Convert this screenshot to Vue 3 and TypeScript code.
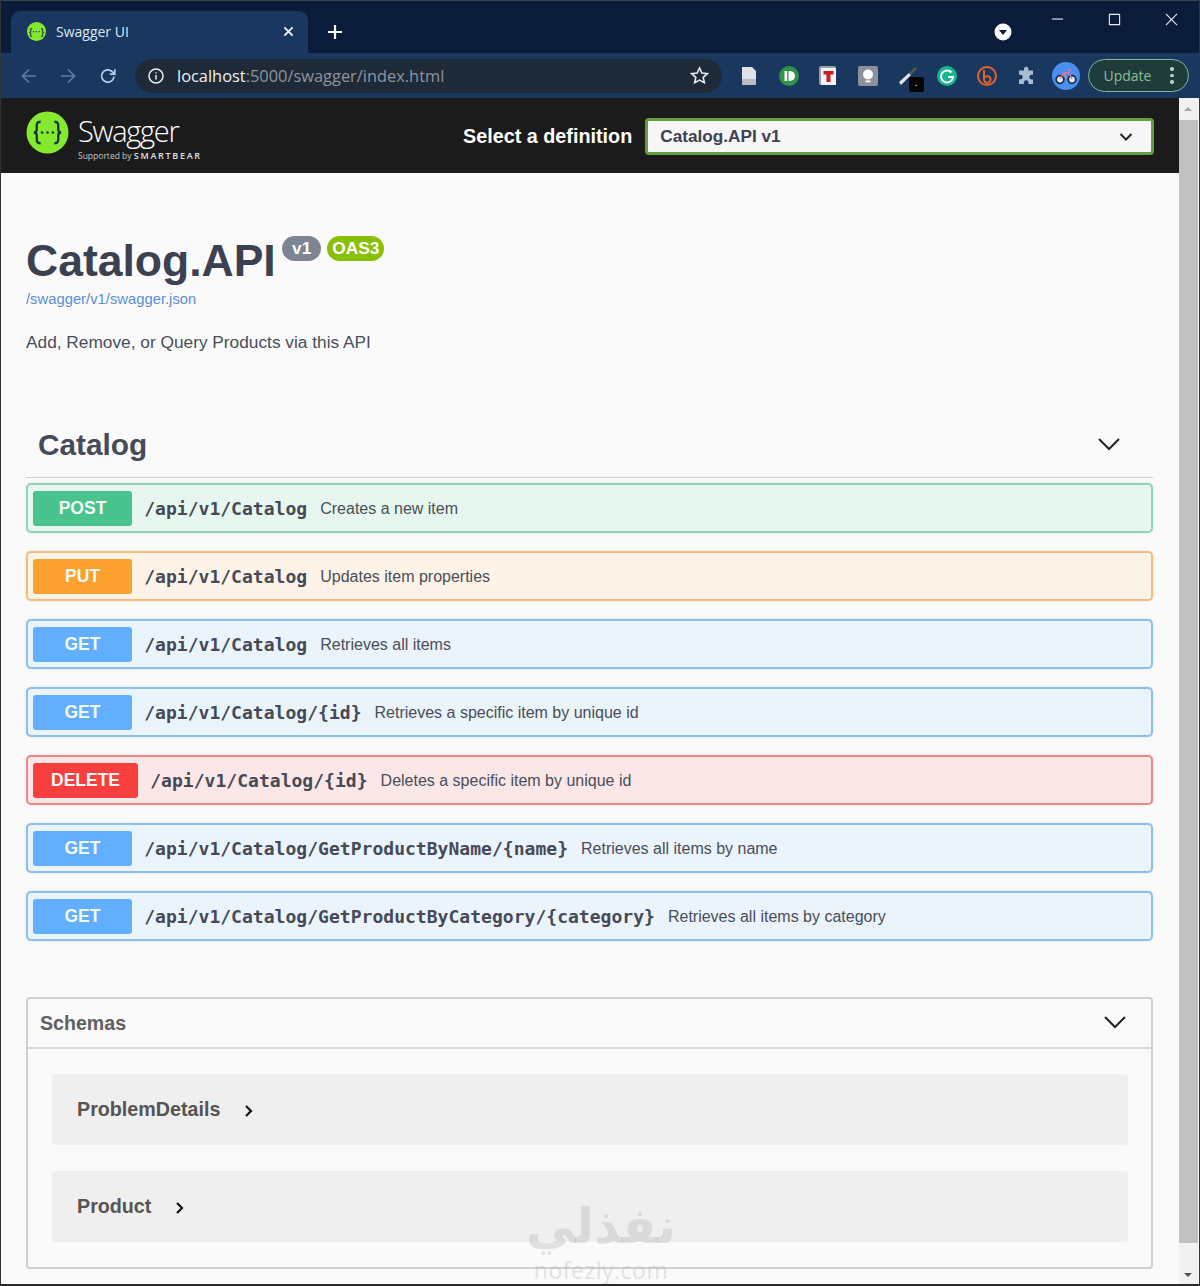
<template>
  <div class="window">
    <!-- browser chrome -->
    <div class="tabstrip">
      <div class="tab">
        <svg class="favicon" viewBox="0 0 18 18">
          <circle cx="9" cy="9" r="9" fill="#85ea2d" />
          <text x="9" y="12" text-anchor="middle" class="favicon-text">{···}</text>
        </svg>
        <span class="tab-title">Swagger UI</span>
        <svg class="tab-close" viewBox="0 0 12 12"><path d="M1.5 1.5l9 9M10.5 1.5l-9 9" /></svg>
      </div>
      <svg class="new-tab" viewBox="0 0 16 16"><path d="M8 1v14M1 8h14" /></svg>
      <div class="strip-spacer"></div>
      <svg class="media-btn" viewBox="0 0 18 18">
        <circle cx="9" cy="9" r="8.5" fill="#fff" />
        <path d="M5 7h8l-4 5z" fill="#0a1c3a" />
      </svg>
      <div class="win-buttons">
        <svg viewBox="0 0 14 14"><path d="M1 6.5h12" /></svg>
        <svg viewBox="0 0 14 14"><path d="M1.5 1.5h11v11h-11z" /></svg>
        <svg viewBox="0 0 14 14"><path d="M1 1l12 12M13 1L1 13" /></svg>
      </div>
    </div>

    <div class="toolbar">
      <svg class="nav-icon dim" viewBox="0 0 18 18"><path d="M16 9H2.5M9 2.5L2.5 9 9 15.5" /></svg>
      <svg class="nav-icon dim" viewBox="0 0 18 18"><path d="M2 9h13.5M9 2.5L15.5 9 9 15.5" /></svg>
      <svg class="nav-icon reload" viewBox="0 0 18 18"><path d="M15 9.5A6.2 6.2 0 1 1 13.2 4.6L15.5 7" /><path d="M15.8 2.2v5h-5" /></svg>
      <div class="omnibox">
        <svg class="info-icon" viewBox="0 0 16 16">
          <circle cx="8" cy="8" r="7" />
          <path d="M8 7v4.5M8 4.2v1.4" />
        </svg>
        <span class="url"><span class="host">localhost</span>:5000/swagger/index.html</span>
        <svg class="star" viewBox="0 0 18 18"><path d="M9 1.8l2.2 4.8 5.2.6-3.9 3.500 1.1 5.200L9 13.300l-4.600 2.600 1.100-5.200-3.900-3.500 5.200-.6z" /></svg>
      </div>
      <div class="extensions">
        <svg viewBox="0 0 20 20"><path d="M3 1h10l4 4v14H3z" fill="#dfe3e8" /><path d="M3 13h14v6H3z" fill="#b9bcc0" /></svg>
        <svg viewBox="0 0 20 20"><circle cx="10" cy="10" r="10" fill="#2f9444" /><rect x="5.500" y="5" width="2.600" height="10" fill="#fff" /><path d="M9.500 5h1.500a5 5 0 0 1 0 10H9.500z" fill="#fff" /></svg>
        <svg viewBox="0 0 20 20"><rect x="1" y="0" width="17" height="19" rx="2" fill="#9aa0a8" /><rect x="3" y="2" width="15" height="17" fill="#f4f4f4" /><path d="M5.500 5h10v3.500h-3V16h-4V8.500h-3z" fill="#d11a20" /></svg>
        <svg viewBox="0 0 20 20"><rect width="20" height="20" rx="2" fill="#8b929a" /><circle cx="10" cy="8.500" r="5" fill="#fff" /><rect x="7.500" y="14.500" width="5" height="1.800" fill="#fff" /></svg>
        <div class="pen-wrap">
          <svg viewBox="0 0 20 20"><path d="M1 16L11 7l2 2L3 19z" fill="#e6e6e6" /><path d="M11 7l6-6 2 2-6 6z" fill="#555" /></svg>
          <span class="pen-badge">.</span>
        </div>
        <svg viewBox="0 0 20 20"><circle cx="10" cy="10" r="10" fill="#15b58e" /><path d="M14.500 6.500A6 6 0 1 0 16 11h-5" fill="none" stroke="#fff" stroke-width="2" /></svg>
        <svg viewBox="0 0 20 20"><circle cx="10" cy="10" r="9" fill="none" stroke="#e0642c" stroke-width="2" /><path d="M7 4v9.500a3.300 3.300 0 1 0 1-2.400" fill="none" stroke="#e0642c" stroke-width="2" /></svg>
        <svg viewBox="0 0 20 20"><path d="M7 3a2.200 2.200 0 0 1 4.400 0v1.500H16v4.300h-1.400a2.300 2.300 0 0 0 0 4.600H16V18H11.500v-1.400a2.300 2.300 0 0 0-4.600 0V18H2v-4.600h1.400a2.300 2.300 0 0 0 0-4.600H2V4.500h5z" fill="#a9bcd6" /></svg>
        <svg class="avatar" viewBox="0 0 28 28">
          <circle cx="14" cy="14" r="14" fill="#4c8df0" />
          <circle cx="8" cy="17.500" r="3.800" fill="#dfe8f5" stroke="#1d2a3a" stroke-width="1.800" />
          <circle cx="20" cy="17.500" r="3.800" fill="#dfe8f5" stroke="#1d2a3a" stroke-width="1.800" />
          <path d="M8 17l4-6h5l3 6M12 11l2 6M16 8h3" fill="none" stroke="#e07a8a" stroke-width="1.300" />
        </svg>
      </div>
      <div class="update-btn">
        <span>Update</span>
        <span class="dots"><i></i><i></i><i></i></span>
      </div>
    </div>

    <div class="viewport">
      <div class="page">
        <!-- swagger topbar -->
        <header class="topbar">
          <div class="logo">
            <svg class="logo-mark" viewBox="0 0 44 44">
              <circle cx="22" cy="22" r="21.500" fill="#85ea2d" />
              <path d="M15 11c-4 0-4 2-4 5v3c0 2-1 3-3 3 2 0 3 1 3 3v3c0 3 0 5 4 5M29 11c4 0 4 2 4 5v3c0 2 1 3 3 3-2 0-3 1-3 3v3c0 3 0 5-4 5" fill="none" stroke="#173647" stroke-width="2.400" />
              <circle cx="16.500" cy="22" r="1.300" fill="#173647" />
              <circle cx="22" cy="22" r="1.300" fill="#173647" />
              <circle cx="27.500" cy="22" r="1.300" fill="#173647" />
            </svg>
            <div class="logo-text">
              <span class="logo-name">Swagger</span>
              <span class="logo-sub">Supported by <b>SMARTBEAR</b></span>
            </div>
          </div>
          <span class="select-label">Select a definition</span>
          <div class="select-box">
            <span>Catalog.API v1</span>
            <svg viewBox="0 0 14 10"><path d="M1.500 2l5.500 5.500L12.500 2" /></svg>
          </div>
        </header>

        <section class="info">
          <div class="title-row">
            <h1>Catalog.API</h1>
            <span class="badge version">v1</span>
            <span class="badge oas">OAS3</span>
          </div>
          <a class="spec-link">/swagger/v1/swagger.json</a>
          <p class="api-desc">Add, Remove, or Query Products via this API</p>
        </section>

        <section class="tag-section">
          <div class="tag-head">
            <h2>Catalog</h2>
            <svg class="chev-down" viewBox="0 0 24 14"><path d="M2 2l10 10L22 2" /></svg>
          </div>
          <div class="ops">
            <div v-for="op in operations" :key="op.method + op.path" class="opblock" :class="op.method.toLowerCase()">
              <span class="method">{{ op.method }}</span>
              <span class="path">{{ op.path }}</span>
              <span class="summary">{{ op.summary }}</span>
            </div>
          </div>
        </section>

        <section class="schemas">
          <div class="schemas-head">
            <h3>Schemas</h3>
            <svg class="chev-down" viewBox="0 0 24 14"><path d="M2 2l10 10L22 2" /></svg>
          </div>
          <div class="models">
            <div v-for="m in models" :key="m" class="model">
              <span>{{ m }}</span>
              <svg viewBox="0 0 10 14"><path d="M2 2l5 5-5 5" /></svg>
            </div>
          </div>
        </section>
      </div>

      <div class="scrollbar">
        <div class="arrow up"></div>
        <div class="thumb"></div>
        <div class="arrow down"></div>
      </div>
    </div>

    <!-- watermark over the page -->
    <div class="watermark">
      <span class="wm-ar" lang="ar" dir="rtl">نفذلي</span>
      <span class="wm-en">nofezly.com</span>
    </div>
  </div>
</template>

<script setup lang="ts">
interface Operation {
  method: string
  path: string
  summary: string
}

const operations: Operation[] = [
  { method: 'POST', path: '/api/v1/Catalog', summary: 'Creates a new item' },
  { method: 'PUT', path: '/api/v1/Catalog', summary: 'Updates item properties' },
  { method: 'GET', path: '/api/v1/Catalog', summary: 'Retrieves all items' },
  { method: 'GET', path: '/api/v1/Catalog/{id}', summary: 'Retrieves a specific item by unique id' },
  { method: 'DELETE', path: '/api/v1/Catalog/{id}', summary: 'Deletes a specific item by unique id' },
  { method: 'GET', path: '/api/v1/Catalog/GetProductByName/{name}', summary: 'Retrieves all items by name' },
  { method: 'GET', path: '/api/v1/Catalog/GetProductByCategory/{category}', summary: 'Retrieves all items by category' },
]

const models = ['ProblemDetails', 'Product']
</script>

<style>
html,
body {
  margin: 0;
  background: #fafafa;
}
</style>

<style scoped>
.window {
  position: relative;
  width: 1200px;
  height: 1286px;
  overflow: hidden;
  display: flex;
  flex-direction: column;
  box-sizing: border-box;
  border-left: 1px solid #333;
  border-right: 1px solid #333;
  border-bottom: 2px solid #2a2a2a;
  font-family: "Liberation Sans", Arial, sans-serif;
  background: #fafafa;
}

/* Tabs */
.tabstrip {
  height: 53px;
  flex: none;
  display: flex;
  align-items: flex-end;
  background: #0a1c3a;
  box-sizing: border-box;
  border-top: 1px solid #39424f;
}
.tab {
  width: 297px;
  height: 42px;
  margin-left: 10px;
  background: #1a3760;
  border-radius: 9px 9px 0 0;
  display: flex;
  align-items: center;
  box-sizing: border-box;
  padding: 0 0 2px 16px;
}
.favicon {
  width: 19px;
  height: 19px;
  flex: none;
}
.favicon-text {
  font-size: 8px;
  font-weight: 700;
  fill: #173647;
  font-family: "Liberation Sans", sans-serif;
}
.tab-title {
  margin-left: 10px;
  font-family: "Open Sans", sans-serif;
  font-size: 14px;
  color: #dfe6f0;
  flex: 1;
}
.tab-close {
  width: 11px;
  height: 11px;
  margin-right: 14px;
  fill: none;
  stroke: #f2f4f7;
  stroke-width: 2;
}
.new-tab {
  width: 16px;
  height: 16px;
  margin: 0 0 13px 19px;
  fill: none;
  stroke: #fff;
  stroke-width: 2.200;
}
.strip-spacer {
  flex: 1;
}
.media-btn {
  width: 18px;
  height: 18px;
  margin-bottom: 12px;
}
.win-buttons {
  align-self: flex-start;
  display: flex;
  gap: 44px;
  margin: 12px 21px 0 39px;
}
.win-buttons svg {
  width: 13px;
  height: 13px;
  fill: none;
  stroke: #e6eaf0;
  stroke-width: 1.200;
}

/* Address bar */
.toolbar {
  height: 45px;
  flex: none;
  display: flex;
  align-items: center;
  background: #1a3760;
  padding-left: 19px;
}
.nav-icon {
  width: 18px;
  height: 18px;
  margin-right: 21px;
  fill: none;
  stroke-width: 1.700;
}
.nav-icon.dim {
  stroke: #5f7ba6;
}
.nav-icon.reload {
  stroke: #b4cdf0;
  margin-left: 1px;
  margin-right: 18px;
}
.omnibox {
  width: 587px;
  height: 34px;
  border-radius: 17px;
  background: #1f2a38;
  display: flex;
  align-items: center;
  box-sizing: border-box;
  padding: 0 13px;
  flex: none;
}
.info-icon {
  width: 16px;
  height: 16px;
  fill: none;
  stroke: #eee;
  stroke-width: 1.500;
  flex: none;
}
.url {
  margin-left: 13px;
  font-family: "Open Sans", sans-serif;
  font-size: 16.400px;
  color: #8e959f;
  flex: 1;
  white-space: nowrap;
}
.host {
  color: #eef0f3;
}
.star {
  width: 19px;
  height: 19px;
  fill: none;
  stroke: #e8ebef;
  stroke-width: 1.500;
}
.extensions {
  display: flex;
  align-items: center;
  gap: 19.700px;
  margin-left: 17px;
}
.extensions > svg,
.pen-wrap svg {
  width: 20px;
  height: 20px;
  flex: none;
  display: block;
}
.extensions > svg.avatar {
  width: 28px;
  height: 28px;
  margin-left: -5px;
}
.pen-wrap {
  position: relative;
}
.pen-badge {
  position: absolute;
  left: 11px;
  top: 11px;
  width: 15px;
  height: 15px;
  background: #050505;
  border-radius: 2px;
  color: #fff;
  font-size: 10px;
  line-height: 11px;
  text-align: center;
}
.update-btn {
  margin-left: 8px;
  width: 101px;
  height: 33px;
  box-sizing: border-box;
  border: 1px solid #7fb89c;
  border-radius: 17px;
  background: #1f3b3a;
  display: flex;
  align-items: center;
  justify-content: space-between;
  padding: 0 14px 0 15px;
  font-family: "Open Sans", sans-serif;
  font-size: 14px;
  color: #8dbd96;
}
.dots {
  display: flex;
  flex-direction: column;
  gap: 3px;
}
.dots i {
  display: block;
  width: 3.500px;
  height: 3.500px;
  border-radius: 50%;
  background: #a8d8bc;
}

/* Page */
.viewport {
  flex: 1;
  min-height: 0;
  display: flex;
}
.page {
  flex: 1;
  min-width: 0;
  background: #fafafa;
}
.scrollbar {
  width: 19px;
  flex: none;
  margin-right: 1px;
  display: flex;
  flex-direction: column;
  background: #f1f1f1;
}
.thumb {
  flex: 1;
  background: #c1c1c1;
}
.arrow {
  height: 22px;
  position: relative;
}
.arrow::after {
  content: "";
  position: absolute;
  left: 5px;
  width: 0;
  height: 0;
  border-left: 4px solid transparent;
  border-right: 4px solid transparent;
}
.arrow.up::after {
  top: 9px;
  border-bottom: 4px solid #a5a5a5;
}
.arrow.down {
  height: 41px;
}
.arrow.down::after {
  bottom: 7px;
  border-top: 4px solid #505050;
}

.topbar {
  height: 75px;
  background: #1b1b1b;
  display: flex;
  align-items: center;
  box-sizing: border-box;
  padding: 0 25px 0 25px;
}
.logo {
  display: flex;
  align-items: center;
  margin-top: -6px;
  width: 437px;
  flex: none;
}
.logo-mark {
  width: 43px;
  height: 43px;
  flex: none;
}
.logo-text {
  display: flex;
  flex-direction: column;
  margin-left: 9px;
  margin-top: 12px;
  color: #fff;
}
.logo-name {
  font-family: "Open Sans", sans-serif;
  font-size: 29px;
  line-height: 32px;
  letter-spacing: -1.300px;
  font-weight: 300;
}
.logo-sub {
  font-family: "Open Sans", sans-serif;
  font-size: 8.500px;
  line-height: 12px;
  margin-top: 3px;
  color: #c8c8c8;
}
.logo-sub b {
  font-size: 9px;
  font-weight: 600;
  letter-spacing: 1.700px;
  color: #e0e0e0;
}
.select-label {
  font-size: 19.800px;
  font-weight: 700;
  color: #fff;
  white-space: nowrap;
  margin-top: 2px;
}
.select-box {
  margin-left: 13px;
  flex: 1;
  height: 37px;
  margin-top: 2px;
  box-sizing: border-box;
  border: 3px solid #62a03f;
  border-radius: 4px;
  background: #f7f7f7;
  display: flex;
  align-items: center;
  justify-content: space-between;
  padding: 0 18px 0 12px;
  font-size: 17.200px;
  font-weight: 700;
  color: #3b4151;
}
.select-box svg {
  width: 14px;
  height: 10px;
  fill: none;
  stroke: #222;
  stroke-width: 2;
}

.info {
  padding: 63px 25px 0;
}
.title-row {
  display: flex;
  align-items: flex-start;
}
h1 {
  margin: 0;
  font-size: 44.500px;
  line-height: 50px;
  font-weight: 700;
  color: #3b4151;
}
.badge {
  height: 25px;
  line-height: 24px;
  margin-top: 0;
  border-radius: 13px;
  color: #fff;
  font-size: 17.300px;
  font-weight: 700;
  text-align: center;
  box-sizing: border-box;
}
.version {
  width: 39px;
  margin-left: 6.500px;
  background: #7d8492;
}
.oas {
  width: 57px;
  margin-left: 6px;
  background: #89bf04;
}
.spec-link {
  display: block;
  margin-top: 3px;
  font-size: 14.800px;
  line-height: 20px;
  color: #5b8fd0;
}
.api-desc {
  margin: 23px 0 0;
  font-size: 17.300px;
  line-height: 20px;
  color: #4a4e59;
}

.tag-section {
  padding: 0 26px 0 25px;
  margin-top: 63px;
}
.tag-head {
  height: 63px;
  display: flex;
  align-items: center;
  justify-content: space-between;
  box-sizing: border-box;
  padding: 0 32px 0 12px;
  border-bottom: 1px solid #cfd0d2;
}
h2 {
  margin: -2px 0 0;
  font-size: 29.800px;
  font-weight: 700;
  color: #464b57;
}
.chev-down {
  width: 24px;
  height: 14px;
  fill: none;
  stroke: #222;
  stroke-width: 2;
  margin-top: -4px;
}
.ops {
  display: flex;
  flex-direction: column;
  gap: 18px;
  margin-top: 5px;
}
.opblock {
  height: 50px;
  box-sizing: border-box;
  display: flex;
  align-items: center;
  border: 2px solid;
  border-radius: 5px;
  padding-left: 5px;
  box-shadow: 0 0 3px rgba(0, 0, 0, 0.1);
}
.method {
  min-width: 99px;
  height: 35px;
  line-height: 35px;
  margin-top: 1px;
  box-sizing: border-box;
  padding: 0 18px;
  border-radius: 3px;
  color: #f4f8f6;
  font-size: 17.500px;
  font-weight: 700;
  text-align: center;
}
.path {
  margin-left: 12.200px;
  font-family: "DejaVu Sans Mono", "Liberation Mono", monospace;
  font-size: 18px;
  letter-spacing: 0.030px;
  font-weight: 700;
  color: #454a56;
  white-space: nowrap;
}
.summary {
  margin-left: 13px;
  font-size: 16px;
  color: #4a4e59;
  white-space: nowrap;
  margin-top: 1px;
}
.post {
  background: #e8f6f0;
  border-color: #8fd6b6;
}
.post .method {
  background: #49c48e;
}
.put {
  background: #fdf3e8;
  border-color: #f4bd7c;
}
.put .method {
  background: #fca130;
}
.get {
  background: #ebf3fb;
  border-color: #8cbfec;
}
.get .method {
  background: #61affe;
}
.delete {
  background: #fbe7e7;
  border-color: #e88a8a;
}
.delete .method {
  background: #f93e3e;
}

.schemas {
  margin: 56px 26px 0 25px;
  height: 272px;
  box-sizing: border-box;
  border: 2px solid #d0d0d0;
  border-radius: 4px;
}
.schemas-head {
  height: 50px;
  box-sizing: border-box;
  display: flex;
  align-items: center;
  justify-content: space-between;
  padding: 0 24px 0 12px;
  border-bottom: 2px solid #d8d8d8;
}
.schemas-head .chev-down {
  margin-top: -2px;
}
h3 {
  margin: 0;
  font-size: 19.600px;
  font-weight: 700;
  color: #606060;
}
.models {
  display: flex;
  flex-direction: column;
  gap: 26px;
  padding: 25px 23px 0 24px;
}
.model {
  height: 71px;
  background: #efefef;
  border-radius: 4px;
  display: flex;
  align-items: center;
  padding-left: 25px;
  font-size: 19.700px;
  font-weight: 700;
  color: #555;
}
.model svg {
  width: 10px;
  height: 14px;
  margin: 2px 0 0 24px;
  fill: none;
  stroke: #111;
  stroke-width: 2.200;
}

.watermark {
  position: absolute;
  left: 520px;
  top: 1198px;
  width: 160px;
  display: flex;
  flex-direction: column;
  align-items: center;
  pointer-events: none;
  color: rgba(180, 180, 180, 0.36);
}
.wm-ar {
  font-family: "DejaVu Sans", sans-serif;
  font-size: 49px;
  line-height: 58px;
  font-weight: 700;
}
.wm-en {
  font-family: "Open Sans", sans-serif;
  font-size: 23px;
  line-height: 28px;
  letter-spacing: 0.500px;
}
</style>
